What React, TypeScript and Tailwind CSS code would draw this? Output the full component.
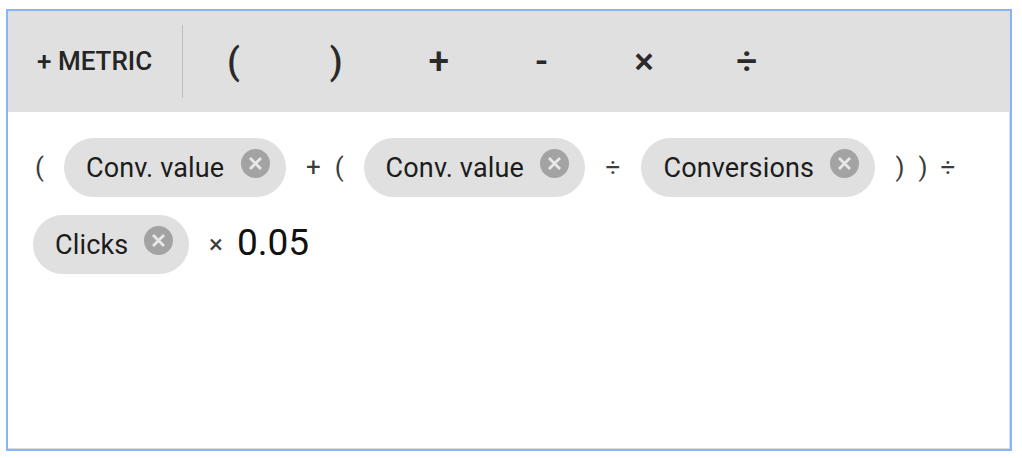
import React from "react";

const font = { fontFamily: "Roboto, sans-serif" };

const Chip: React.FC<{ label: string; className: string }> = ({ label, className }) => (
  <span className={`flex h-[59px] items-center justify-between rounded-full bg-[#e0e0e0] pl-[22px] pr-[16px] pt-[1px] text-[27px] tracking-[0.15px] text-[#1c1c1c] ${className}`}>
    {label}
    <svg className="mb-[9px] h-[29px] w-[29px]" viewBox="0 0 29 29">
      <circle cx="14.5" cy="14.5" r="14.5" fill="#a3a3a3" />
      <path d="M9 9l11 11M20 9L9 20" stroke="#e8e8e8" strokeWidth="2.8" />
    </svg>
  </span>
);

const Op: React.FC<{ label: string; className?: string }> = ({ label, className }) => (
  <span className={`text-[26px] text-[#3c3c3c] ${className}`}>{label}</span>
);

const ToolbarKey: React.FC<{ label: string }> = ({ label }) => (
  <span className="flex w-[102.7px] justify-center text-[37px] font-medium text-[#2a2a2a]">{label}</span>
);

export default function App() {
  return (
    <div className="h-[458px] w-[1022px] bg-white pl-[6px] pt-[9px]" style={font}>
      <div className="h-[442px] w-[1006px] border-2 border-[#8ab4f8] bg-white">
        <div className="h-full border-b border-r border-[#dcdcdc]">
          <div className="flex h-[101px] items-center bg-[#e0e0e0]">
            <span className="ml-[29px] text-[26px] font-medium text-[#252525]">+ METRIC</span>
            <div className="ml-[30px] mr-[-1px] h-[73px] w-px bg-[#bdbdbd]" />
            <ToolbarKey label="(" />
            <ToolbarKey label=")" />
            <ToolbarKey label="+" />
            <ToolbarKey label="-" />
            <ToolbarKey label="×" />
            <ToolbarKey label="÷" />
          </div>
          <div className="flex flex-wrap items-center gap-y-[9px] pl-[25px] pt-[26px]">
            <Op label="(" className="ml-[2px]" />
            <Chip label="Conv. value" className="ml-[20px] w-[222px]" />
            <Op label="+" className="ml-[20px]" />
            <Op label="(" className="ml-[14px]" />
            <Chip label="Conv. value" className="ml-[20px] w-[221px]" />
            <Op label="÷" className="ml-[21px]" />
            <Chip label="Conversions" className="ml-[21px] w-[234px]" />
            <Op label=")" className="ml-[20px]" />
            <Op label=")" className="ml-[14px]" />
            <Op label="÷" className="ml-[13px]" />
            <div className="basis-full" />
            <Chip label="Clicks" className="w-[156px]" />
            <Op label="×" className="ml-[20px]" />
            <span className="mb-[5px] ml-[14px] text-[37px] leading-none text-[#111]">0.05</span>
          </div>
        </div>
      </div>
    </div>
  );
}
